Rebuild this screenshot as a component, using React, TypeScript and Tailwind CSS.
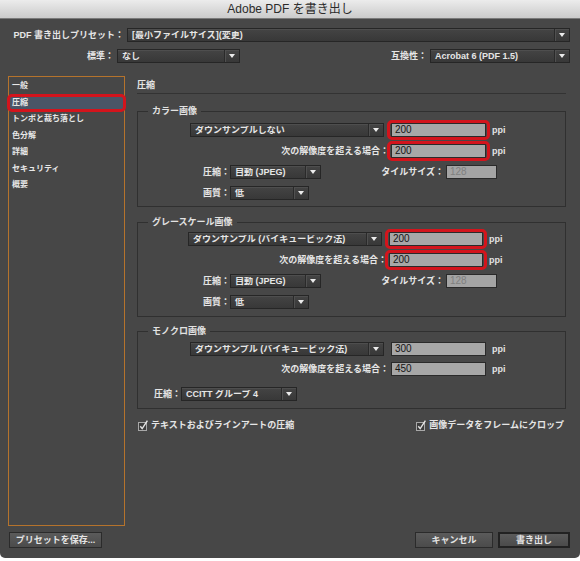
import React from 'react';
import clsx from 'clsx';

// ドロップダウン（Illustrator ダーク UI 風）
function Select({ children, className }: { children: React.ReactNode; className?: string }) {
  return (
    <div
      className={clsx(
        'flex h-[14px] items-center border border-[#262626] bg-gradient-to-b from-[#444444] to-[#383838] shadow-[inset_0_1px_0_#4e4e4e]',
        className
      )}
    >
      <span className="flex-1 truncate pl-[4px] text-[9px] font-bold leading-none text-[#e6e6e6]">{children}</span>
      <span className="flex h-full w-[15px] items-center justify-center border-l border-[#2a2a2a] shadow-[inset_1px_0_0_#505050]">
        <svg width="6" height="4" viewBox="0 0 6 4">
          <path d="M0 0h6L3 4z" fill="#ececec" />
        </svg>
      </span>
    </div>
  );
}

function Field({
  value,
  className,
  hl,
  disabled,
}: {
  value: string;
  className?: string;
  hl?: boolean;
  disabled?: boolean;
}) {
  return (
    <div className={clsx('relative h-[14px]', className)}>
      <div
        className={clsx(
          'flex h-full items-center border border-[#2a2a2a] pl-[3px] text-[10px] leading-none',
          disabled ? 'bg-[#a4a4a4] text-[#808080]' : 'bg-[#a7a7a7] text-[#151515]'
        )}
      >
        {value}
      </div>
      {hl && (
        <span className="pointer-events-none absolute inset-x-[-4px] inset-y-[-3px] rounded-[5px] border-[3px] border-[#d3141c]" />
      )}
    </div>
  );
}

function Label({ children, className }: { children: React.ReactNode; className?: string }) {
  return <div className={clsx('text-right text-[9px] font-bold leading-none text-[#e6e6e6]', className)}>{children}</div>;
}

function Group({ title, children, className }: { title: string; children: React.ReactNode; className?: string }) {
  return (
    <fieldset className={clsx('border border-[#303030]', className)}>
      <legend className="ml-[10px] px-[4px] text-[9px] font-bold leading-[12px] text-[#e2e2e2]">{title}</legend>
      {children}
    </fieldset>
  );
}

function Ppi() {
  return <span className="ml-[6px] text-[9px] font-bold leading-none text-[#e2e2e2]">ppi</span>;
}

function Check({ label }: { label: string }) {
  return (
    <div className="flex items-center gap-[2px]">
      <svg width="12" height="12" viewBox="0 0 12 12">
        <rect x="1.5" y="3.5" width="8" height="8" fill="#3c3c3c" stroke="#a8a8a8" />
        <path d="M3.3 7.2 L5.2 9.6 L10.4 1.6" fill="none" stroke="#e4e4e4" strokeWidth="1.4" />
      </svg>
      <span className="text-[9px] font-bold leading-none text-[#e6e6e6]">{label}</span>
    </div>
  );
}

function Button({ children, className, primary }: { children: React.ReactNode; className?: string; primary?: boolean }) {
  return (
    <button
      type="button"
      className={clsx(
        'flex h-[16px] items-center justify-center bg-gradient-to-b from-[#5b5b5b] to-[#4b4b4b] text-[9px] font-bold leading-none text-[#e4e4e4]',
        primary ? 'border-2 border-[#222222]' : 'border border-[#2b2b2b]',
        className
      )}
    >
      {children}
    </button>
  );
}

const sideItems = ['一般', '圧縮', 'トンボと裁ち落とし', '色分解', '詳細', 'セキュリティ', '概要'];

export default function App() {
  return (
    <div className="h-[561px] w-[580px] bg-white font-['Liberation_Sans','Noto_Sans_CJK_JP',sans-serif]">
      <div className="flex h-[558px] flex-col overflow-hidden rounded-b-[5px] bg-[#474747]">
        {/* タイトルバー */}
        <div className="flex h-[19px] shrink-0 items-center justify-center border-b border-[#7a7a7a] bg-gradient-to-b from-[#ececec] to-[#cbcbcb] text-[12px] leading-none text-[#2b2b2b]">
          Adobe PDF を書き出し
        </div>

        {/* プリセット */}
        <div className="mt-[9px] flex items-center pr-[10px]">
          <Label className="w-[127px] pr-[3px]">PDF 書き出しプリセット：</Label>
          <Select className="flex-1">[最小ファイルサイズ](変更)</Select>
        </div>

        <div className="mt-[7px] flex items-center pr-[10px]">
          <Label className="w-[117px] pr-[3px]">標準：</Label>
          <Select className="w-[123px]">なし</Select>
          <div className="flex-1" />
          <Label className="pr-[3px]">互換性：</Label>
          <Select className="w-[140px]">Acrobat 6 (PDF 1.5)</Select>
        </div>

        {/* メイン */}
        <div className="mt-[13px] flex h-[450px] shrink-0 pl-[8px] pr-[14px]">
          <div className="w-[117px] shrink-0 border border-[#b5732c] pt-[1px]">
            {sideItems.map((item, i) => (
              <div
                key={item}
                className={clsx(
                  'relative flex h-[16.5px] items-center pl-[3px] text-[8px] font-bold leading-none text-[#e8e8e8]',
                  i === 1 && 'bg-[#4a5566]'
                )}
              >
                {item}
                {i === 1 && (
                  <span className="pointer-events-none absolute inset-x-[-2px] inset-y-[-1px] rounded-[5px] border-[3px] border-[#d3141c]" />
                )}
              </div>
            ))}
          </div>

          <div className="ml-[12px] flex flex-1 flex-col">
            <div className="h-[18px] border-b border-[#333333] pt-[5px] text-[9px] font-bold leading-none text-[#e6e6e6]">
              圧縮
            </div>

            <Group title="カラー画像" className="mt-[11px] pt-[6px] pb-[6px]">
              <div className="flex flex-col gap-[7px]">
                <div className="flex items-center">
                  <Select className="ml-[52px] w-[194px]">ダウンサンプルしない</Select>
                  <Field value="200" hl className="ml-[7px] w-[95px]" />
                  <Ppi />
                </div>
                <div className="flex items-center">
                  <Label className="w-[253px] pr-[2px]">次の解像度を超える場合：</Label>
                  <Field value="200" hl className="w-[95px]" />
                  <Ppi />
                </div>
                <div className="flex items-center">
                  <Label className="w-[92px]">圧縮：</Label>
                  <Select className="w-[91px]">自動 (JPEG)</Select>
                  <Label className="w-[125px] pr-[2px] text-[#8c8c8c]">タイルサイズ：</Label>
                  <Field value="128" disabled className="w-[51px]" />
                </div>
                <div className="flex items-center">
                  <Label className="w-[92px]">画質：</Label>
                  <Select className="w-[79px]">低</Select>
                </div>
              </div>
            </Group>

            <Group title="グレースケール画像" className="mt-[9px] pt-[4px] pb-[7px]">
              <div className="flex flex-col gap-[7px]">
                <div className="flex items-center">
                  <Select className="ml-[50px] w-[194px]">ダウンサンプル (バイキュービック法)</Select>
                  <Field value="200" hl className="ml-[7px] w-[94px]" />
                  <Ppi />
                </div>
                <div className="flex items-center">
                  <Label className="w-[251px] pr-[2px]">次の解像度を超える場合：</Label>
                  <Field value="200" hl className="w-[94px]" />
                  <Ppi />
                </div>
                <div className="flex items-center">
                  <Label className="w-[92px]">圧縮：</Label>
                  <Select className="w-[91px]">自動 (JPEG)</Select>
                  <Label className="w-[125px] pr-[2px] text-[#8c8c8c]">タイルサイズ：</Label>
                  <Field value="128" disabled className="w-[51px]" />
                </div>
                <div className="flex items-center">
                  <Label className="w-[92px]">画質：</Label>
                  <Select className="w-[79px]">低</Select>
                </div>
              </div>
            </Group>

            <Group title="モノクロ画像" className="mt-[8px] pt-[5px] pb-[7px]">
              <div className="flex flex-col">
                <div className="flex items-center">
                  <Select className="ml-[52px] w-[194px]">ダウンサンプル (バイキュービック法)</Select>
                  <Field value="300" className="ml-[7px] w-[95px]" />
                  <Ppi />
                </div>
                <div className="mt-[6px] flex items-center">
                  <Label className="w-[253px] pr-[2px]">次の解像度を超える場合：</Label>
                  <Field value="450" className="w-[95px]" />
                  <Ppi />
                </div>
                <div className="mt-[11px] flex items-center">
                  <Label className="w-[43px]">圧縮：</Label>
                  <Select className="w-[116px]">CCITT グループ 4</Select>
                </div>
              </div>
            </Group>

            <div className="mt-[10px] flex h-[12px] items-center justify-between pr-[2px]">
              <Check label="テキストおよびラインアートの圧縮" />
              <Check label="画像データをフレームにクロップ" />
            </div>
          </div>
        </div>

        {/* ボタン */}
        <div className="mt-[6px] flex items-center pl-[9px] pr-[10px]">
          <Button className="w-[93px]">プリセットを保存...</Button>
          <div className="flex-1" />
          <Button className="w-[78px]">キャンセル</Button>
          <Button primary className="ml-[5px] w-[72px]">書き出し</Button>
        </div>
      </div>
    </div>
  );
}
